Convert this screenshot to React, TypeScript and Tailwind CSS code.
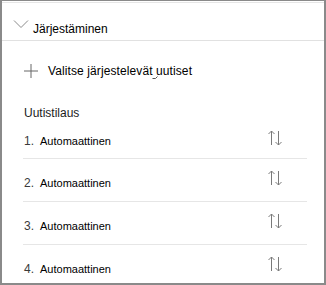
const rows = [1, 2, 3, 4]

function SortIcon() {
  return (
    <svg width="15" height="16" viewBox="0 0 15 16" fill="none" stroke="#7a7a7a" strokeWidth="1">
      <path d="M3.5 1v14M0.5 4l3-3 3 3" />
      <path d="M10.5 1v14M7.5 12l3 3 3-3" />
    </svg>
  )
}

export default function App() {
  return (
    <div
      className="w-[326px] h-[285px] bg-white border-x-2 border-b-2 border-t border-[#8a8a8a] overflow-hidden text-black"
      style={{ fontFamily: '"Liberation Sans", Arial, sans-serif' }}
    >
      <div className="mt-px border-t border-[#e6e6e6]">
        {/* header */}
        <div className="h-[38px] flex items-start pl-[11px] pt-[15px] gap-[4px] border-b border-[#e1e1e1]">
          <svg className="mt-[2px]" width="16" height="8" viewBox="0 0 16 8" fill="none" stroke="#8a8a8a" strokeWidth="1">
            <path d="M1 0.5l7 7 7-7" />
          </svg>
          <span className="text-[12px] leading-[16px] mt-[3px]">Järjestäminen</span>
        </div>

        {/* add */}
        <div className="relative flex items-center pl-[21px] mt-[22px] gap-[9px] h-[16px]">
          <svg width="16" height="16" viewBox="0 0 16 16" fill="none" stroke="#666" strokeWidth="1">
            <path d="M8 1v14M1 8h14" />
          </svg>
          <span className="text-[12px] leading-[16px] tracking-[0.1px]">Valitse järjestelevät uutiset</span>
          <svg className="absolute left-[150px] top-[13px]" width="6" height="4" viewBox="0 0 6 4" fill="none" stroke="#555" strokeWidth="1">
            <path d="M0.5 2.5h3l2-2" />
          </svg>
        </div>

        {/* order */}
        <div className="pl-[22px] mt-[26px] text-[12px] leading-[16px] text-[#1b1b1b]">Uutistilaus</div>

        <div className="ml-[21px] mr-[17px]">
          {rows.map((n, i) => (
            <div
              key={n}
              className={
                i === 0
                  ? 'h-[38px] flex items-start justify-between border-b border-[#e6e6e6]'
                  : i === rows.length - 1
                    ? 'h-[42px] flex items-start justify-between'
                    : 'h-[43px] flex items-start justify-between border-b border-[#e6e6e6]'
              }
            >
              <div className={i === 0 ? 'flex items-baseline pt-[12px] pl-px' : 'flex items-baseline pt-[16px] pl-px'}>
                <span className="w-[16px] text-[12px] leading-[16px] text-[#3a3a3a]">{n}.</span>
                <span className="text-[11px] leading-[16px]">Automaattinen</span>
              </div>
              <div className={i === 0 ? 'pt-[9px] pr-[24px]' : 'pt-[11px] pr-[24px]'}>
                <SortIcon />
              </div>
            </div>
          ))}
        </div>
      </div>
    </div>
  )
}
